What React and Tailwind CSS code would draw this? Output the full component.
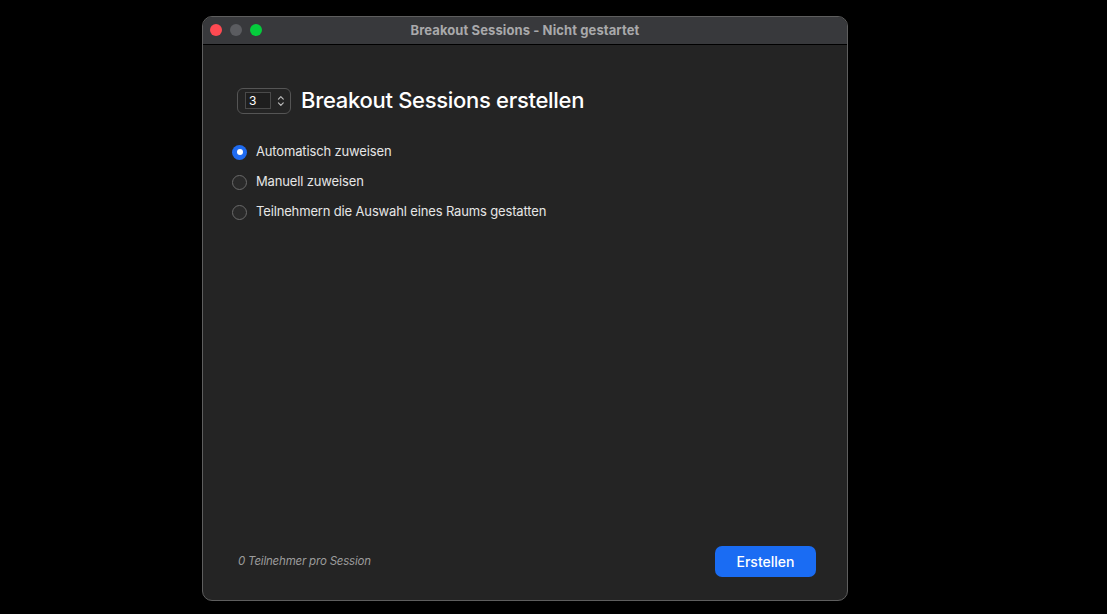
import React from 'react';

const font = { fontFamily: 'Inter, "Noto Sans", sans-serif' };

function Radio({ checked, label }) {
  return (
    <div className="flex h-[30px] items-center gap-[9px]">
      {checked ? (
        <span className="flex h-[15px] w-[15px] items-center justify-center rounded-full bg-[#1f6bf0]">
          <span className="h-[6px] w-[6px] rounded-full bg-white" />
        </span>
      ) : (
        <span className="h-[15px] w-[15px] rounded-full border border-[#6a6a6a] bg-[#2a2a2a]" />
      )}
      <span className="text-[13px] tracking-[-0.15px] text-[#e6e6e6]">{label}</span>
    </div>
  );
}

export default function App() {
  return (
    <div className="h-[614px] w-[1107px] bg-black pl-[202px] pt-[16px]" style={font}>
      <div className="flex h-[585px] w-[646px] flex-col overflow-hidden rounded-[10px] border border-[#5e5e5e] bg-[#242424]">
        {/* title bar */}
        <div className="relative flex h-[28px] items-center justify-center border-b border-black bg-[#38393c]">
          <div className="absolute left-[7px] top-[7px] flex gap-[8px]">
            <span className="h-[12px] w-[12px] rounded-full bg-[#fe4a52]" />
            <span className="h-[12px] w-[12px] rounded-full bg-[#5b5c60]" />
            <span className="h-[12px] w-[12px] rounded-full bg-[#05cc3c]" />
          </div>
          <span className="text-[13px] font-bold tracking-[0.1px] text-[#a9a9ab]">Breakout Sessions - Nicht gestartet</span>
        </div>

        {/* body */}
        <div className="flex flex-1 flex-col pl-[29px] pr-[31px] pt-[39px] pb-[23px]">
          <div className="flex items-center gap-[10px] pl-[5px]">
            <div className="flex h-[26px] w-[54px] items-center rounded-[6px] border border-[#555] pl-[7px] pr-[4px]">
              <div className="flex h-[17px] w-[27px] items-center border border-[#4a4a4a] bg-[#1e1e1e] pl-[3px] text-[12px] text-white">3</div>
              <svg width="10" height="14" viewBox="0 0 10 14" className="ml-[5px]">
                <path d="M2.5 5 L5 2.5 L7.5 5" fill="none" stroke="#bdbdbd" strokeWidth="1.2" strokeLinecap="round" strokeLinejoin="round" />
                <path d="M2.5 9 L5 11.5 L7.5 9" fill="none" stroke="#bdbdbd" strokeWidth="1.2" strokeLinecap="round" strokeLinejoin="round" />
              </svg>
            </div>
            <span className="text-[22px] font-medium tracking-[-0.3px] text-white">Breakout Sessions erstellen</span>
          </div>

          <div className="mt-[20px] flex flex-col">
            <Radio checked label="Automatisch zuweisen" />
            <Radio label="Manuell zuweisen" />
            <Radio label="Teilnehmern die Auswahl eines Raums gestatten" />
          </div>

          <div className="mt-auto flex items-center justify-between pl-[6px]">
            <span className="text-[11.5px] italic tracking-[-0.2px] text-[#9c9c9c]">0 Teilnehmer pro Session</span>
            <button className="h-[31px] w-[101px] rounded-[7px] bg-[#1a6cf3] text-[14px] font-medium text-white">Erstellen</button>
          </div>
        </div>
      </div>
    </div>
  );
}
